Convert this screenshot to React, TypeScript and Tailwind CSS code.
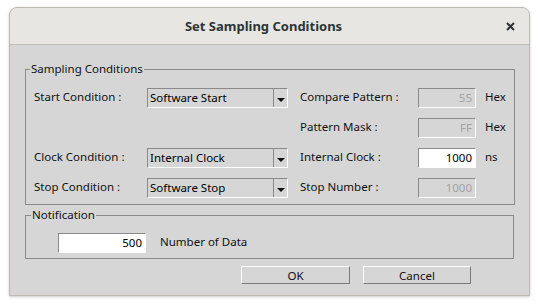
import React from 'react';

const font = { fontFamily: '"Noto Sans", "Open Sans", sans-serif' };

const Combo: React.FC<{ value: string }> = ({ value }) => (
  <div className="flex h-[20px] w-[141px] border-t border-l border-[#8a8a8a] border-b border-r border-b-white border-r-white bg-[#d6d6d6]">
    <span className="flex-1 pl-[2px] leading-[17px] text-black">{value}</span>
    <div className="flex w-[14px] items-end justify-center border-l border-[#8a8a8a] pb-[4px]">
      <svg width="8" height="5" viewBox="0 0 8 5">
        <polygon points="0,0 8,0 4,4" fill="#111" />
      </svg>
    </div>
  </div>
);

const Field: React.FC<{ value: string; disabled?: boolean; width?: string }> = ({
  value,
  disabled = false,
  width = 'w-[58px]',
}) => (
  <div
    className={`h-[20px] ${width} border-t border-l border-[#8a8a8a] border-b border-r border-b-white border-r-white pr-[3px] text-right leading-[17px] ${
      disabled ? 'bg-[#d6d6d6] text-[#a3a3a3]' : 'bg-white text-black'
    }`}
  >
    {value}
  </div>
);

const Row: React.FC<{ children: React.ReactNode }> = ({ children }) => (
  <div className="flex h-[20px] items-start leading-[18px]">{children}</div>
);

const RightPart: React.FC<{ label: string; value: string; disabled?: boolean; unit?: string }> = ({
  label,
  value,
  disabled,
  unit,
}) => (
  <div className="ml-[12px] flex items-start">
    <span className="w-[118px]">{label}</span>
    <Field value={value} disabled={disabled} />
    {unit && <span className="ml-[9px]">{unit}</span>}
  </div>
);

const App: React.FC = () => {
  return (
    <div className="h-[305px] w-[540px] bg-white pl-[9px] pt-[7px]" style={font}>
      <div className="flex h-[289px] w-[521px] flex-col overflow-hidden rounded-t-[8px] border border-[#bdbab5] bg-[#d6d6d6] text-[11.5px] text-[#111] shadow-[0_1px_3px_rgba(0,0,0,0.2)]">
        <div className="relative flex h-[37px] shrink-0 items-center justify-center border-b border-[#c2bfba] bg-[#e8e6e3] pr-[12px] pt-[1px]">
          <span className="text-[13px] font-bold text-[#2e3436]">Set Sampling Conditions</span>
          <svg className="absolute right-[14px] top-[14px]" width="9" height="9" viewBox="0 0 9 9">
            <path d="M1 1 L8 8 M8 1 L1 8" stroke="#2e3436" strokeWidth="2" />
          </svg>
        </div>

        <div className="flex flex-col px-[15px] pt-[16px]">
          <fieldset className="border border-[#8a8a8a] px-[8px] pb-[6px]">
            <legend className="-ml-[4px] px-[1px] leading-[16px]">Sampling Conditions</legend>
            <div className="mt-[11px] flex flex-col gap-[10px]">
              <Row>
                <span className="w-[113px]">Start Condition :</span>
                <Combo value="Software Start" />
                <RightPart label="Compare Pattern :" value="55" disabled unit="Hex" />
              </Row>
              <Row>
                <span className="w-[113px]" />
                <div className="w-[141px]" />
                <RightPart label="Pattern Mask :" value="FF" disabled unit="Hex" />
              </Row>
              <Row>
                <span className="w-[113px]">Clock Condition :</span>
                <Combo value="Internal Clock" />
                <RightPart label="Internal Clock :" value="1000" unit="ns" />
              </Row>
              <Row>
                <span className="w-[113px]">Stop Condition :</span>
                <Combo value="Software Stop" />
                <RightPart label="Stop Number :" value="1000" disabled />
              </Row>
            </div>
          </fieldset>

          <fieldset className="mt-[2px] border border-[#8a8a8a] pb-[5px] pl-[32px]">
            <legend className="-ml-[27px] px-[1px] leading-[16px]">Notification</legend>
            <div className="mt-[10px] flex items-start leading-[18px]">
              <Field value="500" width="w-[88px]" />
              <span className="ml-[14px]">Number of Data</span>
            </div>
          </fieldset>

          <div className="mt-[7px] flex justify-end gap-[13px] pr-[43px]">
            <button className="h-[18px] w-[109px] border border-t-white border-l-white border-b-[#7a7a7a] border-r-[#7a7a7a] bg-[#d6d6d6] leading-[15px] text-[#111]">
              OK
            </button>
            <button className="h-[18px] w-[108px] border border-t-white border-l-white border-b-[#7a7a7a] border-r-[#7a7a7a] bg-[#d6d6d6] leading-[15px] text-[#111]">
              Cancel
            </button>
          </div>
        </div>
      </div>
    </div>
  );
};

export default App;
